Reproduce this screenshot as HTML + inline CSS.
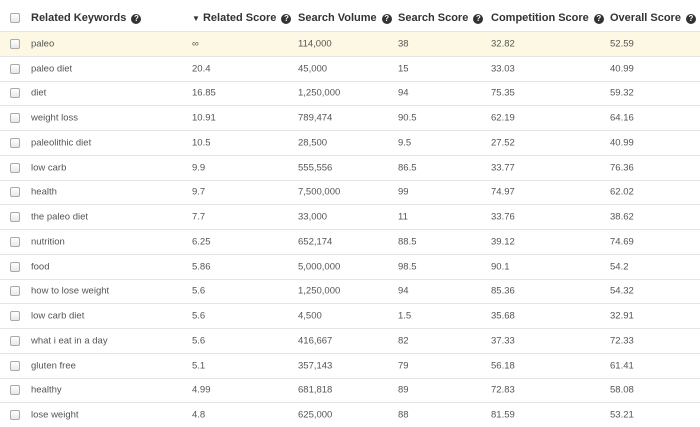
<!DOCTYPE html>
<html><head><style>
body{margin:0;width:700px;height:416px;overflow:hidden;background:#fff;font-family:"Liberation Sans",sans-serif;}
.r{position:absolute;left:0;width:700px;height:24.8px;border-top:1px solid #e4e4e4;box-sizing:border-box;font-size:9.5px;color:#555;}
.r span,.h span{position:absolute;top:50%;transform:translateY(-50%);white-space:nowrap;}
.h{position:absolute;left:0;top:3px;width:700px;height:30px;font-size:11px;font-weight:bold;color:#333;}
.cb{width:8px;height:8px;border:1px solid #aaa;border-radius:2px;background:linear-gradient(#fff,#e8e8e8);left:10px;}
.q{display:inline-block;width:10px;height:10px;border-radius:50%;background:#333;color:#fff;font-size:8px;text-align:center;line-height:10px;vertical-align:0px;margin-left:2px;font-style:normal;}
</style></head><body>
<div class="h">
<span class="cb" style="left:10px"></span>
<span style="left:31px">Related Keywords <i class="q">?</i></span>
<span style="left:192px"><span style="position:static;display:inline;transform:none;font-size:8px">&#9660;</span> Related Score <i class="q">?</i></span>
<span style="left:298px">Search Volume <i class="q">?</i></span>
<span style="left:398px">Search Score <i class="q">?</i></span>
<span style="left:491px">Competition Score <i class="q">?</i></span>
<span style="left:610px">Overall Score <i class="q">?</i></span>
</div>
<div id="rows"></div>
<script>
var d=[["paleo","∞","114,000","38","32.82","52.59"],["paleo diet","20.4","45,000","15","33.03","40.99"],["diet","16.85","1,250,000","94","75.35","59.32"],["weight loss","10.91","789,474","90.5","62.19","64.16"],["paleolithic diet","10.5","28,500","9.5","27.52","40.99"],["low carb","9.9","555,556","86.5","33.77","76.36"],["health","9.7","7,500,000","99","74.97","62.02"],["the paleo diet","7.7","33,000","11","33.76","38.62"],["nutrition","6.25","652,174","88.5","39.12","74.69"],["food","5.86","5,000,000","98.5","90.1","54.2"],["how to lose weight","5.6","1,250,000","94","85.36","54.32"],["low carb diet","5.6","4,500","1.5","35.68","32.91"],["what i eat in a day","5.6","416,667","82","37.33","72.33"],["gluten free","5.1","357,143","79","56.18","61.41"],["healthy","4.99","681,818","89","72.83","58.08"],["lose weight","4.8","625,000","88","81.59","53.21"]];
var x=[31,192,298,398,491,610],h="";
d.forEach(function(r,i){h+='<div class="r" style="top:'+(31+i*24.75)+'px;'+(i==0?'background:#fcf8e3;':'')+'"><span class="cb"></span>';r.forEach(function(c,j){h+='<span style="left:'+x[j]+'px">'+c+'</span>'});h+='</div>'});
document.getElementById("rows").innerHTML=h;
</script>
</body></html>
